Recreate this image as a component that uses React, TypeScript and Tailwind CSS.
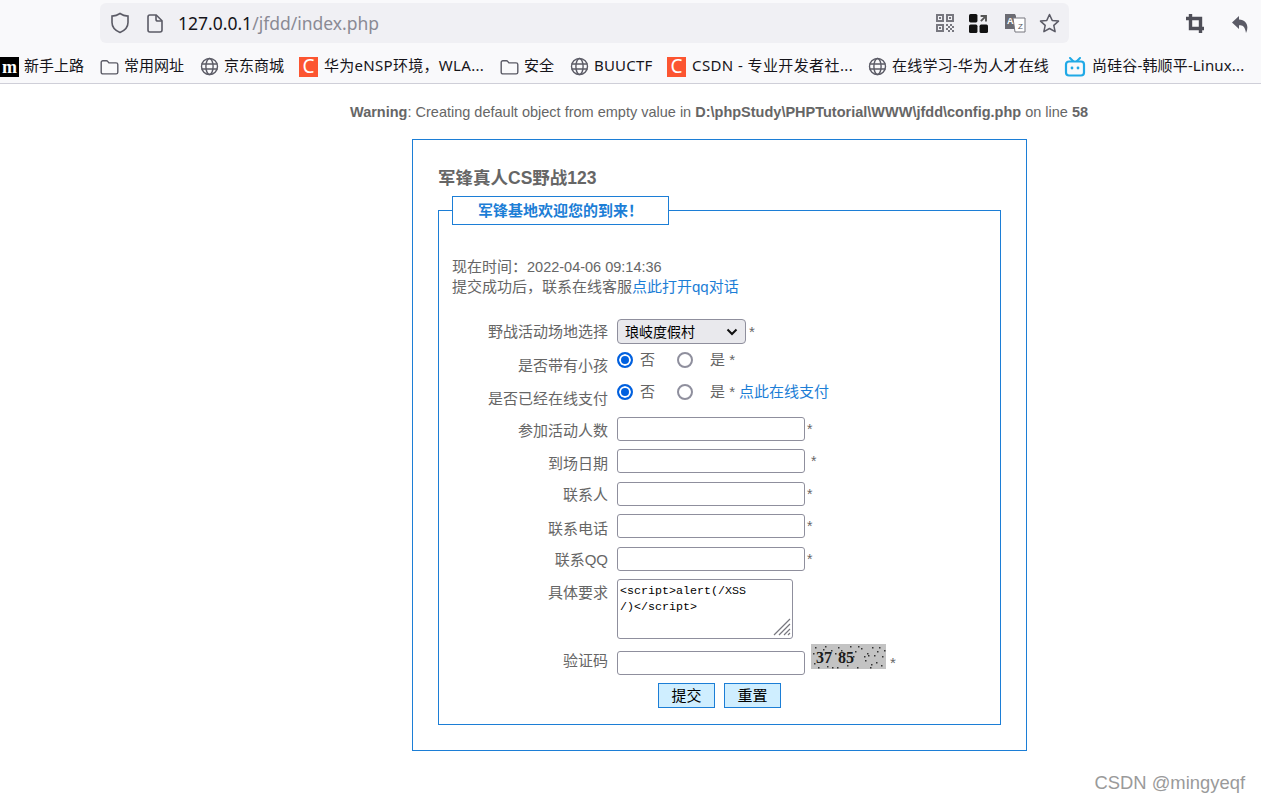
import { type ReactNode } from "react";

const ICON = "shrink-0 text-[#5b5b66]";

function FolderIcon() {
  return (
    <svg width="19" height="18" viewBox="0 0 19 18" fill="none" stroke="currentColor" strokeWidth="1.4" className={ICON}>
      <path d="M1.2 4.5c0-1 .7-1.7 1.7-1.7h3.6c.6 0 1 .3 1.4.8l1 1.3h7.2c1 0 1.7.7 1.7 1.7v7.6c0 1-.7 1.7-1.7 1.7H2.9c-1 0-1.7-.7-1.7-1.7z" />
    </svg>
  );
}

function GlobeIcon() {
  return (
    <svg width="19" height="19" viewBox="0 0 19 19" fill="none" stroke="currentColor" strokeWidth="1.4" className={ICON}>
      <circle cx="9.5" cy="9.5" r="8" />
      <ellipse cx="9.5" cy="9.5" rx="3.6" ry="8" />
      <path d="M1.5 7h16M1.5 12h16" />
    </svg>
  );
}

function CsdnIcon() {
  return (
    <span className="mr-[1px] flex h-5 w-[19px] shrink-0 items-center justify-center bg-[#fc5531] text-[19px] leading-none text-white">
      C
    </span>
  );
}

function Bookmark({ icon, label, className }: { icon: ReactNode; label: string; className: string }) {
  return (
    <div className="flex shrink-0 items-center gap-[5px]">
      {icon}
      <span className={`mt-[-2px] whitespace-nowrap text-[15px] text-[#15141a] ${className}`}>{label}</span>
    </div>
  );
}

function BrowserChrome() {
  return (
    <div className="h-[84px] border-b border-[#cfcfd8] bg-[#f9f9fb]">
      <div className="flex h-[50px] items-start">
        <div className="ml-[100px] mt-[3px] flex h-10 w-[969px] items-center rounded-md bg-[#f0f0f4] pl-[10px] pr-[9px]">
          <svg width="20" height="22" viewBox="0 0 20 22" fill="none" stroke="#5b5b66" strokeWidth="1.6" className="shrink-0">
            <path d="M10 1.5c2.4 1.6 5 2.4 8 2.6v6.4c0 4.6-3.2 8-8 10-4.800-2-8-5.400-8-10V4.100c3-.2 5.600-1 8-2.600z" />
          </svg>
          <svg width="16" height="19" viewBox="0 0 16 19" fill="none" stroke="#5b5b66" strokeWidth="1.6" className="ml-[17px] shrink-0">
            <path d="M2.800 1h6.400L15 6.800V16c0 1.100-.9 2-2 2H2.800c-1 0-1.800-.9-1.800-2V3c0-1.100.8-2 1.800-2z" />
            <path d="M9 1v4.200c0 1 .7 1.800 1.800 1.800H15" />
          </svg>
          <span className="ml-[15px] mt-[1px] text-[17.5px] leading-none text-[#15141a]">
            127.0.0.1<span className="text-[#8a8a94]">/jfdd/index.php</span>
          </span>
          <div className="ml-auto flex items-center gap-[13px]">
            <svg width="18" height="18" viewBox="0 0 18 18" fill="#77777f" className="mr-[2px] shrink-0">
              <path fillRule="evenodd" d="M0 0h8v8H0zM2 2v4h4V2zM10 0h8v8h-8zM12 2v4h4V2zM0 10h8v8H0zM2 12v4h4v-4z" />
              <path d="M3 3h2v2H3zM13 3h2v2h-2zM3 13h2v2H3zM10 10h2v2h-2zM14 10h2v2h-2zM12 12h2v2h-2zM16 12h2v2h-2zM10 14h2v2h-2zM14 14h2v2h-2zM12 16h2v2h-2zM16 16h2v2h-2z" />
            </svg>
            <svg width="19" height="19" viewBox="0 0 18 18" fill="#111" className="mr-[3px] shrink-0">
              <rect x="0" y="0" width="8" height="8" rx="1.500" />
              <rect x="0" y="10" width="8" height="8" rx="1.500" />
              <rect x="10" y="10" width="8" height="8" rx="1.500" />
              <path d="M11 1h6v6h-1.800V4.100L11.900 7.400 10.600 6.100l3.300-3.300H11z" fill="#555" />
            </svg>
            <svg width="22" height="20" viewBox="0 0 22 20" className="shrink-0">
              <path d="M1 1h10l1 2v13H1z" fill="#6b6b72" />
              <path d="M9 5h12v14H11z" fill="#fff" stroke="#77777f" />
              <text x="3" y="11" fontSize="9" fontWeight="700" fill="#fff" fontFamily="Liberation Sans">A</text>
              <text x="14" y="16" fontSize="8" fill="#55555c" fontFamily="Liberation Sans">Z</text>
            </svg>
            <svg width="21" height="20" viewBox="0 0 21 20" fill="none" stroke="#5b5b66" strokeWidth="1.500" strokeLinejoin="round" className="shrink-0">
              <path d="M10.500 1.500l2.700 5.900 6.300.7-4.700 4.300 1.300 6.300-5.600-3.200-5.600 3.200 1.300-6.300L1.500 8.100l6.300-.7z" />
            </svg>
          </div>
        </div>
        <div className="ml-[117px] mt-[14px] flex items-center gap-[28px]">
          <svg width="18" height="19" viewBox="0 0 18 19" fill="none" stroke="#4f4f58" strokeWidth="3.400" className="shrink-0">
            <path d="M4.500 0v14.500H18M0 4.500h14.500V19" />
          </svg>
          <svg width="17" height="18" viewBox="0 0 17 18" fill="#5b5b66" className="shrink-0">
            <path d="M7 1L0 7.500 7 14v-3.800c3.500 0 6 .8 7 7.800 3.200-6.500.8-13-7-13.500z" />
          </svg>
        </div>
      </div>
      <div className="flex h-[33px] items-center gap-4 overflow-hidden">
        <Bookmark
          icon={
            <span className="flex h-5 w-[19px] shrink-0 items-center justify-center bg-black font-['Liberation_Serif',serif] text-[18px] font-bold leading-none text-white">
              m
            </span>
          }
          label="新手上路"
          className="w-[60px]"
        />
        <Bookmark icon={<FolderIcon />} label="常用网址" className="w-[60px]" />
        <Bookmark icon={<GlobeIcon />} label="京东商城" className="w-[59px]" />
        <Bookmark icon={<CsdnIcon />} label="华为eNSP环境，WLA..." className="w-[160px] tracking-[0.3px]" />
        <Bookmark icon={<FolderIcon />} label="安全" className="w-[30px]" />
        <Bookmark icon={<GlobeIcon />} label="BUUCTF" className="w-[57px] tracking-[0.2px]" />
        <Bookmark icon={<CsdnIcon />} label="CSDN - 专业开发者社..." className="w-[160px] tracking-[0.4px]" />
        <Bookmark icon={<GlobeIcon />} label="在线学习-华为人才在线" className="w-[156px] tracking-[0.2px]" />
        <Bookmark
          icon={
            <svg width="22" height="20" viewBox="0 0 22 20" className="mr-[1px] shrink-0">
              <path d="M6 1l3 3M16 1l-3 3" stroke="#20a9e6" strokeWidth="2" strokeLinecap="round" />
              <rect x="2" y="4.500" width="18" height="14" rx="3" fill="none" stroke="#20a9e6" strokeWidth="2.200" />
              <circle cx="8" cy="11" r="1.400" fill="#20a9e6" />
              <circle cx="14" cy="11" r="1.400" fill="#20a9e6" />
            </svg>
          }
          label="尚硅谷-韩顺平-Linux..."
          className="w-[155px] tracking-[0.15px]"
        />
      </div>
    </div>
  );
}

function Row({ label, h, top, children }: { label: string; h: string; top: string; children: ReactNode }) {
  return (
    <div className={`flex ${h}`}>
      <div className={`w-[156px] shrink-0 whitespace-nowrap text-right ${top}`}>{label}</div>
      <div className="ml-[9px] flex min-w-0 flex-1 items-start">{children}</div>
    </div>
  );
}

function TextInput({ star }: { star: string }) {
  return (
    <>
      <input
        type="text"
        className="h-[24px] w-[188px] rounded-[3px] border border-[#8f8f9d] bg-white"
      />
      <span className={`${star} text-[14px] leading-[24px]`}>*</span>
    </>
  );
}

function Radio({ checked, className }: { checked?: boolean; className?: string }) {
  return (
    <input
      type="radio"
      readOnly
      checked={!!checked}
      className={`h-4 w-4 shrink-0 appearance-none rounded-full border-2 border-[#8f8f9d] bg-white checked:border-[#0060df] checked:bg-[#0060df] checked:shadow-[inset_0_0_0_2px_#fff] ${className ?? ""}`}
    />
  );
}

function RadioPair({ children }: { children?: ReactNode }) {
  return (
    <div className="flex items-center leading-5">
      <Radio checked />
      <span className="ml-[7px]">否</span>
      <Radio className="ml-[22px]" />
      <span className="ml-[17px]">是 *</span>
      {children}
    </div>
  );
}

function Captcha() {
  const dots = [
    [4, 3], [9, 8], [14, 2], [20, 6], [27, 3], [33, 9], [39, 2], [44, 7], [50, 4], [56, 9], [61, 3], [66, 7], [71, 12],
    [3, 19], [7, 23], [16, 22], [26, 23], [36, 21], [46, 23], [54, 16], [60, 20], [65, 18], [70, 21], [57, 11], [29, 12],
    [12, 5], [24, 9], [30, 6], [47, 2], [53, 12], [63, 11], [68, 3], [73, 6], [2, 9], [42, 12], [59, 23], [21, 23],
  ];
  return (
    <svg width="75" height="25" viewBox="0 0 75 25" className="ml-[6px] mt-[-7px] shrink-0">
      <rect width="75" height="25" fill="#c3c3c3" />
      {dots.map(([x, y]) => (
        <rect key={`${x}-${y}`} x={x} y={y} width="1.500" height="1.500" fill="#333" />
      ))}
      <text x="5" y="19" fontSize="16" fontWeight="700" fill="#1c1c1c" fontFamily="Liberation Serif">
        <tspan>37</tspan>
        <tspan dx="6">85</tspan>
      </text>
    </svg>
  );
}

function BookingForm() {
  return (
    <div className="ml-[412px] mt-[17px] h-[612px] w-[615px] border border-[#1c7ed6] px-[25px] pt-[26px] font-['Liberation_Sans','Noto_Sans_CJK_SC',sans-serif] text-[15px] leading-5 text-[#666]">
      <h1 className="text-[17.5px] font-bold leading-6">军锋真人CS野战123</h1>
      <div className="mt-[20px] h-[515px] border border-[#1c7ed6] px-[13px]">
        <div className="mt-[-15px] flex h-[29px] w-[217px] items-center border border-[#1c7ed6] bg-white pl-[25px] text-[15px] font-bold text-[#1c7ed6]">
          军锋基地欢迎您的到来！
        </div>
        <div className="mt-[32px]">
          <div>
            现在时间：<span className="text-[14.5px]">2022-04-06 09:14:36</span>
          </div>
          <div>
            提交成功后，联系在线客服<a className="text-[#1c7ed6]">点此打开qq对话</a>
          </div>
        </div>
        <div className="mt-[22px]">
          <Row label="野战活动场地选择" h="h-[31px]" top="pt-[3px]">
            <div className="relative">
              <select className="h-[25px] w-[129px] appearance-none rounded-[4px] border border-[#8f8f9d] bg-[#e9e9ed] pl-[7px] text-[14px] font-normal text-black">
                <option>琅岐度假村</option>
              </select>
              <svg width="12" height="8" viewBox="0 0 12 8" fill="none" stroke="#111" strokeWidth="2" className="pointer-events-none absolute right-[8px] top-[9px]">
                <path d="M1.500 1.500L6 6l4.500-4.500" />
              </svg>
            </div>
            <span className="ml-[3px] leading-[25px]">*</span>
          </Row>
          <Row label="是否带有小孩" h="h-[32px]" top="pt-[6px]">
            <RadioPair />
          </Row>
          <Row label="是否已经在线支付" h="h-[35px]" top="pt-[7px]">
            <RadioPair>
              <a className="ml-1 text-[#1c7ed6]">点此在线支付</a>
            </RadioPair>
          </Row>
          <Row label="参加活动人数" h="h-[32px]" top="pt-[4px]">
            <TextInput star="ml-[2px]" />
          </Row>
          <Row label="到场日期" h="h-[33px]" top="pt-[5px]">
            <TextInput star="ml-[6px]" />
          </Row>
          <Row label="联系人" h="h-[32px]" top="pt-[3px]">
            <TextInput star="ml-[2px]" />
          </Row>
          <Row label="联系电话" h="h-[33px]" top="pt-[5px]">
            <TextInput star="ml-[2px]" />
          </Row>
          <Row label="联系QQ" h="h-[32px]" top="pt-[3px]">
            <TextInput star="ml-[2px]" />
          </Row>
          <Row label="具体要求" h="h-[72px]" top="pt-[4px]">
            <div className="relative">
              <textarea
                readOnly
                value={"<script>alert(/XSS\n/)</script>"}
                className="block h-[60px] w-[176px] resize-none rounded-[3px] border border-[#8f8f9d] bg-white px-[2px] py-[3px] font-['Liberation_Mono',monospace] text-[11.67px] leading-4 text-black"
              />
              <svg width="20" height="20" viewBox="0 0 20 20" stroke="#77777f" strokeWidth="1.200" className="pointer-events-none absolute bottom-[2px] right-[1px]">
                <path d="M2 18L18 2M7 18L18 7M12 18l6-6M16 18l2-2" />
              </svg>
            </div>
          </Row>
          <Row label="验证码" h="h-[32px]" top="pt-0">
            <input type="text" className="h-[24px] w-[188px] rounded-[3px] border border-[#8f8f9d] bg-white" />
            <Captcha />
            <span className="ml-[4px] leading-[24px]">*</span>
          </Row>
          <div className="ml-[206px] flex gap-[9px]">
            <button className="h-[25px] w-[57px] border border-[#1c7ed6] bg-[#cfeeff] text-[15px] text-black">提交</button>
            <button className="h-[25px] w-[57px] border border-[#1c7ed6] bg-[#cfeeff] text-[15px] text-black">重置</button>
          </div>
        </div>
      </div>
    </div>
  );
}

export default function App() {
  return (
    <div className="relative h-[802px] w-[1261px] overflow-hidden bg-white font-['Noto_Sans','Noto_Sans_CJK_SC',sans-serif]">
      <BrowserChrome />
      <div className="mt-[18px] h-5 whitespace-nowrap pl-[350px] font-['Liberation_Sans','Noto_Sans_CJK_SC',sans-serif] text-[14.5px] leading-5 text-[#666]">
        <b>Warning</b>: Creating default object from empty value in <b>D:\phpStudy\PHPTutorial\WWW\jfdd\config.php</b> on line <b>58</b>
      </div>
      <BookingForm />
      <div className="absolute right-[16px] top-[771px] font-['Liberation_Sans',sans-serif] text-[18.4px] leading-6 text-[#9a9a9a]">
        CSDN @mingyeqf
      </div>
    </div>
  );
}
